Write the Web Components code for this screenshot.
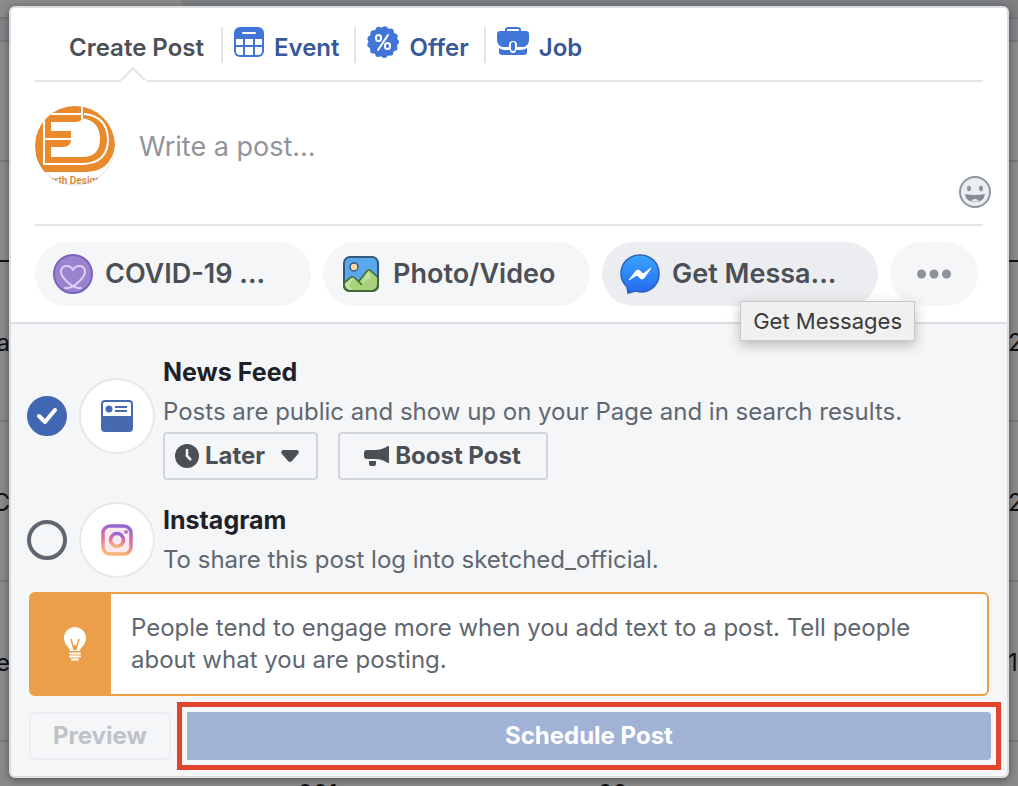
<!DOCTYPE html>
<html lang="en">
<head>
<meta charset="utf-8">
<meta name="viewport" content="width=device-width, initial-scale=1">
<title>Create Post</title>
<style>
    body {
        margin: 0;
        font-family: Inter, "Liberation Sans", sans-serif;
        font-size: 24px;
        line-height: 32px;
        color: #4b4f56;
        --color-line: #e5e5e5;
        --color-border: #dadde1;
        --color-panel: #f5f6f8;
        --color-text: #4b4f56;
        --color-text-light: #606770;
        --color-link: #385898;
        --color-blue: #4267b2;
        --color-tip: #eb9f4a;
    }
</style>
</head>
<body>
<page-shell>
    <page-backdrop slot="backdrop"></page-backdrop>
    <post-composer>
        <composer-tabs slot="tabs"></composer-tabs>
        <composer-input slot="input" placeholder="Write a post..."></composer-input>
        <attach-bar slot="attach">
            <attach-pill icon="covid">COVID-19 ...</attach-pill>
            <attach-pill icon="photo">Photo/Video</attach-pill>
            <attach-pill icon="messenger" active tooltip="Get Messages">Get Messa...</attach-pill>
            <attach-pill icon="more" compact></attach-pill>
        </attach-bar>
        <share-target icon="feed" label="News Feed" checked>
            Posts are public and show up on your Page and in search results.
            <outline-button slot="actions" icon="clock" caret>Later</outline-button>
            <outline-button slot="actions" icon="megaphone" wide>Boost Post</outline-button>
        </share-target>
        <share-target icon="instagram" label="Instagram">
            To share this post log into sketched_official.
        </share-target>
        <tip-box>People tend to engage more when you add text to a post. Tell people about what you are posting.</tip-box>
        <composer-footer></composer-footer>
    </post-composer>
</page-shell>

<script>
const ICONS = {
    event: `<svg width="30" height="30" viewBox="0 0 30 30">
        <rect width="30" height="30" rx="6" fill="#4175d8"/>
        <rect x="8" y="5" width="14" height="2" rx="1" fill="#fff"/>
        <path fill="#fff" d="M2 12h7v6H2zM11 12h8v6h-8zM21 12h7v6h-7zM2 20h7v8H6q-4 0-4-4zM11 20h8v8h-8zM21 20h7v4q0 4-4 4h-3z"/>
    </svg>`,
    offer: `<svg width="32" height="32" viewBox="0 0 32 32">
        <circle cx="16" cy="16" r="14.500" fill="#4175d8"/>
        <circle cx="16" cy="16" r="13" fill="none" stroke="#4175d8" stroke-width="6" stroke-linecap="round" stroke-dasharray="0 6.283"/>
        <g fill="none" stroke="#fff" stroke-width="2" stroke-linecap="round">
            <rect x="9" y="9" width="5" height="6" rx="2.500"/>
            <rect x="18" y="17" width="5" height="6" rx="2.500"/>
            <path d="M21 9 11 24"/>
        </g>
    </svg>`,
    job: `<svg width="32" height="30" viewBox="0 0 32 30">
        <path d="M9 5V3q0-2 2-2h10q2 0 2 2v2" fill="none" stroke="#4175d8" stroke-width="2"/>
        <path d="M3 4h26q3 0 3 3v6q0 5-5 7H20v-2q0-4-4-4t-4 4v2H5q-5-2-5-7V7q0-3 3-3z" fill="#4175d8"/>
        <path d="M2 21q3 2 6 2h5q0 3 3 3t3-3h5q3 0 6-2v4q0 3-3 3H5q-3 0-3-3z" fill="#4175d8"/>
        <rect x="14" y="15" width="4" height="9" rx="2" fill="#4175d8"/>
    </svg>`,
    avatar: `<svg width="80" height="80" viewBox="0 0 80 80">
        <defs><clipPath id="disc"><circle cx="40" cy="40" r="40"/></clipPath></defs>
        <g clip-path="url(#disc)">
            <rect width="80" height="80" fill="#fff"/>
            <path d="M0 0h80v40q-4 26-30 26H0z" fill="#e98b2c"/>
            <path d="M16 16h25q5 0 6-4 18 3 18 21 0 18-18 18H16V41h12q8 0 8-8v-8H16z" fill="#fff"/>
            <path d="M47 8H9v50h39q25-1 25-25Q72 10 49 8M47 0v13M9 33h27" fill="none" stroke="#fff" stroke-width="2"/>
            <text x="40" y="78" text-anchor="middle" font-family="Roboto, sans-serif" font-size="10" font-weight="600" fill="#d98a3a">arth Design</text>
        </g>
        <path d="M79 48a40 40 0 0 1-78 0" fill="none" stroke="#000" stroke-opacity=".12"/>
    </svg>`,
    smile: `<svg width="32" height="32" viewBox="0 0 32 32">
        <circle cx="16" cy="16" r="15" fill="#ebedf0" stroke="#8d949e" stroke-width="2"/>
        <ellipse cx="10" cy="12.500" rx="2" ry="2.800" fill="#8d949e"/>
        <ellipse cx="22" cy="12.500" rx="2" ry="2.800" fill="#8d949e"/>
        <path d="M6 18q10 2 20 0-1 8-10 8T6 18z" fill="#858c96"/>
        <path d="M12 25q4-4 8 0-4 1-8 0z" fill="#ebedf0"/>
    </svg>`,
    covid: `<svg width="40" height="40" viewBox="0 0 40 40">
        <circle cx="20" cy="20" r="19" fill="#9b83d0" stroke="#7b62ba" stroke-width="2"/>
        <path d="M12 34q5 1 10-3 10-8 10-13 0-6-6-6-4 0-6 4-2-4-6-4-6 0-6 6 0 5 10 13 5 4 10 3" fill="none" stroke="#ddd0f8" stroke-width="2" stroke-linecap="round" stroke-linejoin="round"/>
    </svg>`,
    photo: `<svg width="36" height="36" viewBox="0 0 36 36">
        <defs><clipPath id="frame"><rect x="1" y="1" width="34" height="34" rx="6"/></clipPath></defs>
        <g clip-path="url(#frame)">
            <rect width="36" height="36" fill="#5aa7ec"/>
            <path d="M0 28 10 20l6 5 10-12 11 10v14H0z" fill="#a9d27c"/>
            <path d="m1 29 10-8-5 9 5 5H1zM26 14l-8 14 8-6 2 4z" fill="#c5e49f"/>
            <path d="m0 28 8-7q2-1 4 1l7 7m-3-4 8-10q2-2 4 0l9 8" fill="none" stroke="#416b32" stroke-width="1.500"/>
        </g>
        <circle cx="11" cy="11" r="4" fill="#fdd6a0" stroke="#35557e" stroke-width="1.500"/>
        <rect x="1" y="1" width="34" height="34" rx="6" fill="none" stroke="#305981" stroke-width="2"/>
        <path d="M1 25v4q0 6 6 6h22q6 0 6-6v-7" fill="none" stroke="#416b32" stroke-width="2"/>
    </svg>`,
    messenger: `<svg width="40" height="40" viewBox="0 0 40 40">
        <defs><linearGradient id="sky" x2="0" y2="1"><stop stop-color="#3aa6ff"/><stop offset="1" stop-color="#2468f0"/></linearGradient></defs>
        <path d="M20 1C9 1 1 9 1 20q0 7 6 13l1 6 8-2q3 1 6 1c10-1 17-8 17-18C39 9 31 1 20 1z" fill="url(#sky)" stroke="#2b62ba" stroke-width="1.500"/>
        <path d="m9 26 7-9q2-2 4 0l3 3 8-6-7 10q-2 2-4 0l-3-3z" fill="#fff" stroke="#fff" stroke-linejoin="round"/>
    </svg>`,
    more: `<svg width="34" height="10" viewBox="0 0 34 10" fill="#8d919c"><circle cx="4.500" cy="5" r="4.500"/><circle cx="17" cy="5" r="4.500"/><circle cx="29.500" cy="5" r="4.500"/></svg>`,
    feed: `<svg width="32" height="32" viewBox="0 0 32 32">
        <rect width="32" height="32" rx="4" fill="#4769af"/>
        <path d="M2 16V4q0-2 2-2h24q2 0 2 2v12z" fill="#fff"/>
        <circle cx="8" cy="9" r="3.500" fill="#4769af"/>
        <path d="M14 7h12M14 11h12" stroke="#4769af" stroke-width="2"/>
    </svg>`,
    instagram: `<svg width="32" height="32" viewBox="0 0 32 32">
        <defs><linearGradient id="insta" x1=".6" y1="0" x2=".4" y2="1"><stop stop-color="#9267d5"/><stop offset=".5" stop-color="#df719b"/><stop offset="1" stop-color="#f7b878"/></linearGradient></defs>
        <rect x="2" y="2" width="28" height="28" rx="7" fill="#fbe9f0"/>
        <g fill="none" stroke="url(#insta)" stroke-width="3.500">
            <rect x="2" y="2" width="28" height="28" rx="7"/>
            <circle cx="16" cy="16" r="6.500"/>
        </g>
        <circle cx="25" cy="8" r="2" fill="#b574c4"/>
    </svg>`,
    clock: `<svg width="24" height="24" viewBox="0 0 24 24"><circle cx="12" cy="12" r="12" fill="#4b4f56"/><path d="M12 5v7l4 4" fill="none" stroke="#f5f6f8" stroke-width="2.500"/></svg>`,
    caret: `<svg width="18" height="12" viewBox="0 0 18 12"><path d="M2 0h14q3 1 1 4l-6 7q-2 2-4 0L1 4Q-1 1 2 0z" fill="#4b4f56"/></svg>`,
    megaphone: `<svg width="25" height="20" viewBox="0 0 25 20" fill="#4b4f56"><path d="M3 4h8q7 0 13-4h1v17h-1q-6-4-13-4H3q-3 0-3-3V7q0-3 3-3z"/><path d="M5 15h7v3q0 2-2 2H7q-2 0-2-2z"/></svg>`,
    check: `<svg width="20" height="16" viewBox="0 0 20 16"><path d="m2 8 6 6L18 2" fill="none" stroke="#fff" stroke-width="4" stroke-linecap="round" stroke-linejoin="round"/></svg>`,
    bulb: `<svg width="22" height="34" viewBox="0 0 22 34">
        <path d="M11 0C5 0 0 5 0 11q0 5 4 9 2 2 2 4h10q0-2 2-4 4-4 4-9C22 5 17 0 11 0z" fill="#fff"/>
        <path d="m7 12 3 11 1-5 1 5 3-11" fill="none" stroke="#eb9f4a" stroke-width="1.500"/>
        <path d="M6 26.500h10M6 29.500h10M8 32.500h6" stroke="#fff" stroke-width="2" stroke-linecap="round"/>
    </svg>`
};

class PageShell extends HTMLElement {
    connectedCallback() {
        this.attachShadow({ mode: 'open' }).innerHTML = `
            <style>
                :host {
                    display: grid;
                    min-height: 100vh;
                    overflow: hidden;
                }
                .layer {
                    grid-area: 1 / 1;
                    display: grid;
                    min-width: 0;
                }
                main {
                    padding: 6px 9px 8px;
                    align-items: start;
                    z-index: 1;
                }
            </style>
            <div class="layer"><slot name="backdrop"></slot></div>
            <main class="layer"><slot></slot></main>
        `;
    }
}

// Dimmed table that shows round the edges of the dialog
class PageBackdrop extends HTMLElement {
    connectedCallback() {
        this.attachShadow({ mode: 'open' }).innerHTML = `
            <style>
                :host {
                    display: flex;
                    flex-direction: column;
                    background: #8a8a8a;
                    color: #111;
                    overflow: hidden;
                }
                div {
                    box-sizing: border-box;
                    border-bottom: 2px solid #777;
                }
                .top {
                    height: 19px;
                    background: linear-gradient(90deg, #8a8a8a 182px, #7e7f81 182px);
                }
                .bar {
                    height: 23px;
                    background: #818386;
                }
                .space { height: 120px; }
                .head {
                    height: 100px;
                    border-color: #111;
                }
                .row {
                    height: 160px;
                    display: flex;
                    justify-content: space-between;
                    align-items: center;
                    padding-top: 4px;
                }
                .row span {
                    width: 10px;
                    display: flex;
                }
                .row span:first-child { justify-content: flex-end; }
                .last {
                    flex: 1 0 0;
                    height: 0;
                    min-height: 24px;
                    border: 0;
                    display: grid;
                    grid-template-columns: 298px 300px 1fr;
                    padding-top: 36px;
                    overflow: hidden;
                }
            </style>
            <div class="top"></div>
            <div class="bar"></div>
            <div class="space"></div>
            <div class="head"></div>
            <div class="row"><span>a</span><span>2</span></div>
            <div class="row"><span>C</span><span>2</span></div>
            <div class="row"><span>e</span><span>1</span></div>
            <div class="last"><span></span><span>201</span><span>22</span></div>
        `;
    }
}

class PostComposer extends HTMLElement {
    connectedCallback() {
        this.attachShadow({ mode: 'open' }).innerHTML = `
            <style>
                :host {
                    display: block;
                    min-width: 0;
                    border: 2px solid var(--color-border);
                    border-radius: 6px;
                    background: var(--color-panel);
                    box-shadow: 0 2px 8px rgba(0,0,0,0.4);
                }
                .compose {
                    padding: 0 24px 16px;
                    background: #fff;
                    border-bottom: 2px solid var(--color-border);
                    border-radius: 4px 4px 0 0;
                }
                .targets {
                    padding: 28px 16px 16px;
                    display: flex;
                    flex-direction: column;
                }
            </style>
            <section class="compose">
                <slot name="tabs"></slot>
                <slot name="input"></slot>
                <slot name="attach"></slot>
            </section>
            <section class="targets"><slot></slot></section>
        `;
    }
}

class ComposerTabs extends HTMLElement {
    connectedCallback() {
        const tabs = [['event', 'Event'], ['offer', 'Offer'], ['job', 'Job']];
        this.attachShadow({ mode: 'open' }).innerHTML = `
            <style>
                :host {
                    display: block;
                    border-bottom: 2px solid var(--color-line);
                }
                nav {
                    display: flex;
                    align-items: center;
                    box-sizing: border-box;
                    height: 72px;
                    padding: 2px 0 0 10px;
                    font-weight: 600;
                    white-space: nowrap;
                }
                a {
                    display: flex;
                    align-items: center;
                    gap: 10px;
                    box-sizing: border-box;
                    height: 36px;
                    padding: 6px 15px 0 11px;
                    border-left: 2px solid var(--color-line);
                    color: var(--color-link);
                    text-decoration: none;
                }
                a svg { margin-bottom: 12px; }
                .current {
                    position: relative;
                    padding: 6px 17px 0 22px;
                    border-color: transparent;
                    color: var(--color-text);
                }
                .current::after {
                    content: "";
                    position: absolute;
                    left: calc(50% - 11px);
                    top: 44px;
                    width: 18px;
                    height: 18px;
                    background: linear-gradient(135deg, #fff 60%, transparent 60%);
                    border: solid var(--color-line);
                    border-width: 2px 0 0 2px;
                    transform: rotate(45deg);
                }
                /* hides the lower half of the notch and the rule under it */
                .current::before {
                    content: "";
                    position: absolute;
                    z-index: 1;
                    left: calc(50% - 13px);
                    top: 53px;
                    width: 26px;
                    height: 16px;
                    background: #fff;
                }
            </style>
            <nav>
                <a class="current" href="#post" aria-current="page">Create Post</a>
                ${tabs.map(([icon, label]) => `<a href="#${icon}">${ICONS[icon]}${label}</a>`).join('')}
            </nav>
        `;
    }
}

class ComposerInput extends HTMLElement {
    connectedCallback() {
        const placeholder = this.getAttribute('placeholder');
        this.attachShadow({ mode: 'open' }).innerHTML = `
            <style>
                :host {
                    display: flex;
                    gap: 24px;
                    height: 118px;
                    padding-top: 24px;
                    border-bottom: 2px solid var(--color-line);
                }
                textarea {
                    flex: 1;
                    min-width: 0;
                    height: 80px;
                    box-sizing: border-box;
                    padding: 23px 0 21px;
                    border: 0;
                    outline: 0;
                    resize: none;
                    overflow: hidden;
                    font: 27px/36px Inter, "Liberation Sans", sans-serif;
                    background: none;
                }
                textarea::placeholder { color: #90949c; }
                button {
                    align-self: flex-end;
                    margin: 0 -8px 16px 0;
                    padding: 0;
                    border: 0;
                    background: none;
                }
                svg { display: block; }
            </style>
            ${ICONS.avatar}
            <textarea aria-label="Post text" placeholder="${placeholder}"></textarea>
            <button type="button" aria-label="Insert an emoji">${ICONS.smile}</button>
        `;
    }
}

class AttachBar extends HTMLElement {
    connectedCallback() {
        this.attachShadow({ mode: 'open' }).innerHTML = `
            <style>
                :host {
                    display: grid;
                    grid-template-columns: 276fr 267fr 276fr 88fr;
                    gap: 12px;
                    padding: 16px 5px 0 0;
                }
            </style>
            <slot></slot>
        `;
    }
}

class AttachPill extends HTMLElement {
    connectedCallback() {
        const tooltip = this.getAttribute('tooltip');
        this.attachShadow({ mode: 'open' }).innerHTML = `
            <style>
                :host {
                    display: block;
                    position: relative;
                    min-width: 0;
                }
                button {
                    display: flex;
                    align-items: center;
                    gap: 12px;
                    width: 100%;
                    height: 64px;
                    padding: 0 18px;
                    border: 0;
                    border-radius: 32px;
                    background: var(--color-panel);
                    color: var(--color-text);
                    font: 600 27px/36px Inter, "Liberation Sans", sans-serif;
                    white-space: nowrap;
                }
                svg { flex: none; }
                :host([icon="photo"]) button {
                    gap: 14px;
                    padding-left: 20px;
                }
                :host([active]) button { background: #ebedf0; }
                :host([compact]) button {
                    justify-content: center;
                    padding: 0;
                }
                .tooltip {
                    position: absolute;
                    z-index: 2;
                    right: -37px;
                    top: 59px;
                    padding: 2px 12px;
                    border: 1px solid #c8c8c8;
                    background: #f0f0f0;
                    color: #3a3a3a;
                    box-shadow: 0 4px 12px rgba(0,0,0,0.25);
                    font-size: 22px;
                    line-height: 34px;
                    white-space: nowrap;
                }
            </style>
            <button type="button"${this.hasAttribute('compact') ? ' aria-label="More"' : ''}>
                ${ICONS[this.getAttribute('icon')]}<slot></slot>
            </button>
            ${tooltip ? `<div class="tooltip" role="tooltip">${tooltip}</div>` : ''}
        `;
    }
}

class ShareTarget extends HTMLElement {
    connectedCallback() {
        const checked = this.hasAttribute('checked');
        this.attachShadow({ mode: 'open' }).innerHTML = `
            <style>
                :host {
                    display: flex;
                    align-items: center;
                    margin-bottom: 12px;
                }
                :host([checked]) { margin-bottom: 20px; }
                .check {
                    display: grid;
                    place-items: center;
                    flex: none;
                    margin-right: 12px;
                }
                .check > * { grid-area: 1 / 1; }
                .check svg { pointer-events: none; }
                input {
                    appearance: none;
                    box-sizing: border-box;
                    width: 40px;
                    height: 40px;
                    margin: 0;
                    border: 4px solid var(--color-text-light);
                    border-radius: 50%;
                }
                input:checked {
                    border-color: var(--color-blue);
                    background: var(--color-blue);
                }
                .badge {
                    flex: none;
                    display: grid;
                    place-items: center;
                    width: 72px;
                    height: 72px;
                    margin-right: 8px;
                    border: 2px solid #e7e8ec;
                    border-radius: 50%;
                    background: #fff;
                }
                .text { min-width: 0; }
                label {
                    display: block;
                    font-size: 25px;
                    line-height: 40px;
                    font-weight: 700;
                    color: #1d2129;
                }
                p {
                    margin: 0;
                    line-height: 40px;
                    color: var(--color-text-light);
                }
                .actions {
                    display: flex;
                    gap: 20px;
                }
            </style>
            <div class="check">
                <input type="checkbox" id="pick"${checked ? ' checked' : ''}>
                ${checked ? ICONS.check : ''}
            </div>
            <div class="badge">${ICONS[this.getAttribute('icon')]}</div>
            <div class="text">
                <label for="pick">${this.getAttribute('label')}</label>
                <p><slot></slot></p>
                <div class="actions"><slot name="actions"></slot></div>
            </div>
        `;
    }
}

class OutlineButton extends HTMLElement {
    connectedCallback() {
        this.attachShadow({ mode: 'open' }).innerHTML = `
            <style>
                :host { display: block; }
                button {
                    display: flex;
                    align-items: center;
                    gap: 6px;
                    height: 48px;
                    padding: 0 17px 0 10px;
                    border: 2px solid #d3d6db;
                    border-radius: 4px;
                    background: var(--color-panel);
                    color: var(--color-text);
                    font: 700 24px/32px Inter, "Liberation Sans", sans-serif;
                    white-space: nowrap;
                }
                :host([wide]) button { padding: 0 25px 0 24px; }
                .caret { margin-left: 10px; }
                svg { display: block; }
            </style>
            <button type="button">
                ${ICONS[this.getAttribute('icon')]}<slot></slot>
                ${this.hasAttribute('caret') ? `<span class="caret">${ICONS.caret}</span>` : ''}
            </button>
        `;
    }
}

class TipBox extends HTMLElement {
    connectedCallback() {
        this.attachShadow({ mode: 'open' }).innerHTML = `
            <style>
                :host {
                    display: flex;
                    margin: 0 2px 16px;
                    border: 2px solid var(--color-tip);
                    border-radius: 6px;
                    background: #fff;
                    color: var(--color-text-light);
                }
                .icon {
                    flex: none;
                    display: grid;
                    place-items: center;
                    width: 80px;
                    padding-left: 8px;
                    box-sizing: border-box;
                    background: var(--color-tip);
                }
                p {
                    margin: 0;
                    padding: 18px 20px;
                }
            </style>
            <div class="icon">${ICONS.bulb}</div>
            <p><slot></slot></p>
        `;
    }
}

class ComposerFooter extends HTMLElement {
    connectedCallback() {
        this.attachShadow({ mode: 'open' }).innerHTML = `
            <style>
                :host {
                    display: flex;
                    gap: 16px;
                    padding-left: 2px;
                }
                button {
                    height: 48px;
                    border: 0;
                    border-radius: 4px;
                    font: 700 24px/32px Inter, "Liberation Sans", sans-serif;
                }
                .preview {
                    padding: 0 22px;
                    border: 2px solid #ebedf0;
                    background: none;
                    color: #bec3c9;
                }
                .highlight {
                    flex: 1;
                    display: flex;
                    outline: 5px solid #e0442c;
                    outline-offset: 5px;
                }
                .schedule {
                    flex: 1;
                    border-radius: 0 4px 4px 0;
                    background: #a0b3d7;
                    color: #fff;
                }
            </style>
            <button type="button" class="preview" disabled>Preview</button>
            <div class="highlight"><button type="button" class="schedule" disabled>Schedule Post</button></div>
        `;
    }
}

customElements.define('page-shell', PageShell);
customElements.define('page-backdrop', PageBackdrop);
customElements.define('post-composer', PostComposer);
customElements.define('composer-tabs', ComposerTabs);
customElements.define('composer-input', ComposerInput);
customElements.define('attach-bar', AttachBar);
customElements.define('attach-pill', AttachPill);
customElements.define('share-target', ShareTarget);
customElements.define('outline-button', OutlineButton);
customElements.define('tip-box', TipBox);
customElements.define('composer-footer', ComposerFooter);
</script>
</body>
</html>
